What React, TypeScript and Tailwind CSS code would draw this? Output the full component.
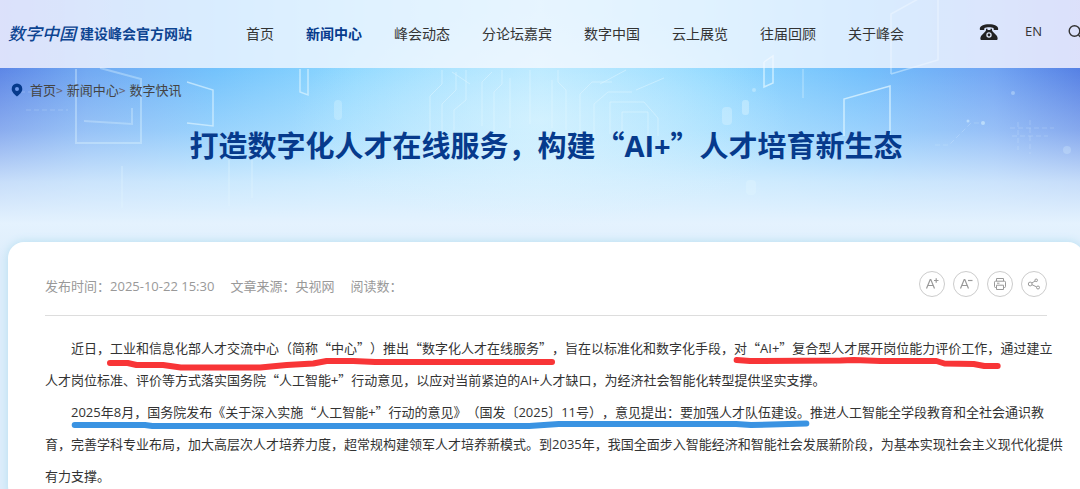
import type { ReactNode } from "react";

const navItems = ["首页", "新闻中心", "峰会动态", "分论坛嘉宾", "数字中国", "云上展览", "往届回顾", "关于峰会"];

function PhoneIcon() {
  return (
    <svg viewBox="0 0 20 18" className="h-[18px] w-5" aria-hidden="true">
      <path
        d="M.8 6.200C.6 3 4.600 1.200 10 1.200s9.400 1.800 9.200 5c0 .6-.4.900-1 .9h-2.600c-.6 0-1-.4-1-1V4.900C12.500 4 7.500 4 5.400 4.900v1.200c0 .6-.4 1-1 1H1.800c-.6 0-1-.3-1-.9z"
        fill="#222"
      />
      <path
        d="M7 5.800h1.500v1.100h3V5.800H13v1.500c.3 1 1.200 1.900 2.600 3.200 1.800 1.600 3 2.900 3 4.700v.6c0 .8-.5 1.200-1.200 1.200H2.600c-.7 0-1.200-.4-1.200-1.200v-.6c0-1.800 1.200-3.100 3-4.700C5.800 9.200 6.700 8.300 7 7.300z"
        fill="#222"
      />
      <circle cx="10" cy="12" r="2.700" fill="#e4ecfc" />
      <circle cx="10" cy="12" r="1.400" fill="#222" />
    </svg>
  );
}

function SearchIcon() {
  return (
    <svg viewBox="0 0 16 16" className="size-4" fill="none" stroke="#333" strokeWidth="1.400" aria-hidden="true">
      <circle cx="6.500" cy="7" r="5.300" />
      <path d="M10.500 11l4 4" />
    </svg>
  );
}

function PinIcon() {
  return (
    <svg viewBox="0 0 12 14" className="h-[14px] w-3" aria-hidden="true">
      <path
        fillRule="evenodd"
        d="M6 .5a5.300 5.300 0 0 0-5.300 5.400C.7 9 3.600 11.300 6 13.600 8.400 11.300 11.300 9 11.300 5.900A5.300 5.300 0 0 0 6 .5zm0 3.400a2 2 0 1 1 0 4 2 2 0 0 1 0-4z"
        fill="#063a8c"
      />
    </svg>
  );
}

function PrintIcon() {
  return (
    <svg viewBox="0 0 14 14" className="size-[14px]" fill="none" stroke="#999" strokeWidth="1" aria-hidden="true">
      <path d="M3.500 4V1.500h7V4M3.500 10.500h-1a1 1 0 0 1-1-1V5.200a1 1 0 0 1 1-1h9a1 1 0 0 1 1 1v4.300a1 1 0 0 1-1 1h-1" />
      <path d="M3.500 8.200h7v4.300h-7zM4 6.200h2.500" />
    </svg>
  );
}

function ShareIcon() {
  return (
    <svg viewBox="0 0 14 14" className="size-[14px]" fill="none" stroke="#999" strokeWidth="1" aria-hidden="true">
      <circle cx="3.200" cy="7" r="1.900" />
      <circle cx="9.200" cy="3.300" r="1.300" />
      <circle cx="11" cy="10.500" r="1.500" />
      <path d="M4.900 6L8.100 4M5 7.700l4.600 2.200" />
    </svg>
  );
}

function FontSizeIcon({ plus }: { plus: boolean }) {
  return (
    <svg viewBox="0 0 14 14" className="size-[14px]" fill="none" stroke="#999" strokeWidth="1.200" aria-hidden="true">
      <path d="M1.500 11.500L5.200 2.500h.6L9.500 11.500M2.900 8.500h5.200" />
      <path d={plus ? "M9 3.500h4.500M11.200 1.200v4.600" : "M9 3.500h4.500"} />
    </svg>
  );
}

function RoundButton({ label, children }: { label: string; children: ReactNode }) {
  return (
    <button
      type="button"
      aria-label={label}
      className="flex size-[26px] items-center justify-center rounded-full border border-[#ccc] bg-white"
    >
      {children}
    </button>
  );
}

function Latin({ children }: { children: ReactNode }) {
  return <span className="font-['Open_Sans',sans-serif]">{children}</span>;
}

function Marked({ d, color, children }: { d: string; color: string; children: ReactNode }) {
  return (
    <span className="relative">
      {children}
      <svg
        viewBox="0 0 100 16"
        preserveAspectRatio="none"
        className="pointer-events-none absolute top-[18px] left-0 h-4 w-full overflow-visible"
        fill="none"
        aria-hidden="true"
      >
        <path
          d={d}
          stroke={color}
          strokeWidth="6"
          strokeLinecap="round"
          strokeLinejoin="round"
          vectorEffect="non-scaling-stroke"
        />
      </svg>
    </span>
  );
}

function Backdrop() {
  return (
    <div className="pointer-events-none absolute inset-x-0 top-0 h-[260px] overflow-hidden" aria-hidden="true">
      <svg viewBox="0 0 1080 260" preserveAspectRatio="none" className="size-full">
        <defs>
          <linearGradient id="sky" x1="0" x2="1" y1="0" y2="0">
            <stop offset="0" stopColor="#5c86e6" />
            <stop offset="0.080" stopColor="#70a8f2" />
            <stop offset="0.200" stopColor="#72c2fc" />
            <stop offset="0.330" stopColor="#8ed8ff" />
            <stop offset="0.500" stopColor="#b0e6ff" />
            <stop offset="0.660" stopColor="#8ed8ff" />
            <stop offset="0.800" stopColor="#72bffc" />
            <stop offset="0.920" stopColor="#70a4f3" />
            <stop offset="1" stopColor="#5580e4" />
          </linearGradient>
          <linearGradient id="fade" x1="0" x2="0" y1="0" y2="1">
            <stop offset="0.260" stopColor="#e4f2fe" stopOpacity="0" />
            <stop offset="0.500" stopColor="#dcf0fe" stopOpacity="0.360" />
            <stop offset="0.700" stopColor="#dff1fe" stopOpacity="0.820" />
            <stop offset="0.860" stopColor="#e4f2fe" />
            <stop offset="1" stopColor="#deedfb" />
          </linearGradient>
          <radialGradient id="glow">
            <stop offset="0" stopColor="#e2f7ff" stopOpacity="0.550" />
            <stop offset="1" stopColor="#d8f3ff" stopOpacity="0" />
          </radialGradient>
          <linearGradient id="edge" x1="0" x2="1" y1="0" y2="0">
            <stop offset="0" stopColor="#a797ef" stopOpacity="0.450" />
            <stop offset="0.120" stopColor="#a797ef" stopOpacity="0" />
            <stop offset="0.850" stopColor="#a797ef" stopOpacity="0" />
            <stop offset="1" stopColor="#a797ef" stopOpacity="0.500" />
          </linearGradient>
        </defs>
        <rect width="1080" height="260" fill="url(#sky)" />
        <rect width="1080" height="68" fill="url(#edge)" />
        <rect width="1080" height="260" fill="url(#fade)" />
        <ellipse cx="540" cy="120" rx="250" ry="110" fill="url(#glow)" />
        <g fill="none" stroke="#e6f8ff">
          <path d="M76 69V143H141V79L100 68" strokeOpacity="0.350" strokeWidth="2" />
          <path d="M84 121L132 124V108" strokeOpacity="0.300" strokeWidth="2" />
          <path d="M187 82L213 90V126L187 123" strokeOpacity="0.600" strokeWidth="1.500" />
          <path d="M300 69V92L308 95V69" strokeOpacity="0.600" strokeWidth="1.500" />
          <path d="M764 62V87L773 83V56L764 62" strokeOpacity="0.700" strokeWidth="1.500" />
          <path d="M891 74V14L938 -12V60L891 74" strokeOpacity="0.450" strokeWidth="1.500" />
          <path d="M844 136V99L890 86V136" strokeOpacity="0.700" strokeWidth="1.500" />
          <path d="M803 69V98M122 166V208M229 160V206M252 160V198" strokeOpacity="0.350" strokeWidth="1.500" />
          <path
            d="M430 132V96l12-12V70M442 134V104l14-14V72M454 130V110l12-10V70M482 126V82l10-10M494 132V92l8-8V70M510 128V78M530 124V70M552 128V80M566 130V90l-8-8V70M580 134V94l12-12h20M594 136V104l14-12h24M610 134V102h34l14 16v18M622 134V112h26v24M470 84l-18-12M600 84l26-14M636 90l28-12"
            strokeOpacity="0.450"
          />
          <path d="M935 145h14l22-22h10M1010 128h44M1012 136h36M1018 122v28M1030 120v34M12 92h22M26 110h42" strokeOpacity="0.220" strokeDasharray="5 3" />
        </g>
        <g fill="#e2f7ff">
          <rect x="722" y="107" width="10" height="18" rx="4" opacity="0.350" />
          <rect x="742" y="100" width="7" height="15" rx="3" opacity="0.400" />
          <rect x="334" y="100" width="8" height="20" rx="4" opacity="0.300" />
          <rect x="746" y="180" width="10" height="15" rx="4" opacity="0.350" />
          <circle cx="754" cy="90" r="2" opacity="0.400" />
          <circle cx="983" cy="123" r="2" opacity="0.500" />
          <circle cx="968" cy="121" r="1.500" opacity="0.500" />
          <circle cx="1013" cy="93" r="2" opacity="0.350" />
          <circle cx="1067" cy="150" r="4" opacity="0.250" />
        </g>
      </svg>
    </div>
  );
}

export default function App() {
  return (
    <div className="relative min-h-screen overflow-hidden bg-[#deedfb] font-['Noto_Sans_CJK_SC',sans-serif] text-[#333] [text-spacing-trim:space-all]">
      <Backdrop />

      <header className="relative flex h-[68px] items-center bg-[#f6f8ff]/78 pb-[2px] pl-2">
        <a href="#" className="flex w-[238px] shrink-0 items-center gap-1 whitespace-nowrap text-[#0d4491]">
          <span className="text-[17px] leading-6 font-medium italic">数字中国</span>
          <span className="text-sm font-bold">建设峰会官方网站</span>
        </a>
        <nav className="flex gap-8 text-sm whitespace-nowrap">
          {navItems.map((item) => (
            <a
              key={item}
              href="#"
              className={item === "新闻中心" ? "font-bold text-[#063a8c]" : ""}
            >
              {item}
            </a>
          ))}
        </nav>
        <div className="-mr-1 ml-auto flex shrink-0 items-center gap-[26px] pb-[2px]">
          <a href="#" aria-label="联系电话">
            <PhoneIcon />
          </a>
          <a href="#" className="font-['Open_Sans',sans-serif] text-[13px]">
            EN
          </a>
          <button type="button" aria-label="搜索">
            <SearchIcon />
          </button>
        </div>
      </header>

      <nav className="relative flex items-center pt-3 pl-[11px] text-[13px] leading-5 text-[#444]">
        <PinIcon />
        <a href="#" className="ml-[7px]">首页</a>
        <span className="mr-1 text-xs text-[#667]">&gt;</span>
        <a href="#">新闻中心</a>
        <span className="mr-1 text-xs text-[#667]">&gt;</span>
        <a href="#">数字快讯</a>
      </nav>

      <h1 className="relative mt-[22px] pl-3 text-center text-[29px] leading-[44px] font-bold text-[#063a8c]">
        打造数字化人才在线服务，构建“<Latin>AI+</Latin>”人才培育新生态
      </h1>

      <main className="relative mt-[74px] -mr-1 ml-2 min-h-[260px] rounded-2xl bg-white pt-[29px] pl-[37px] shadow-[0_0_10px_#b5dff0]">
        <div className="mr-[37px] flex items-center justify-between border-b border-[#ddd] pb-[18px]">
          <div className="flex gap-4 pt-1 text-[13px] leading-5 text-[#999]">
            <span>
              发布时间：<Latin>2025-10-22 15:30</Latin>
            </span>
            <span>文章来源：央视网</span>
            <span>阅读数：</span>
          </div>
          <div className="flex gap-2">
            <RoundButton label="放大字体">
              <FontSizeIcon plus />
            </RoundButton>
            <RoundButton label="缩小字体">
              <FontSizeIcon plus={false} />
            </RoundButton>
            <RoundButton label="打印">
              <PrintIcon />
            </RoundButton>
            <RoundButton label="分享">
              <ShareIcon />
            </RoundButton>
          </div>
        </div>

        <article className="mr-3 pt-4 text-[13px] leading-8">
          <p className="indent-[26px]">
            近日，
            <Marked
              color="#f83537"
              d="M0 7L4 7L6 9L12 9L16 11.500L34 11.500L40 9L46 7.500L49 5L55 5L60 6L84 6L100 6"
            >
              工业和信息化部人才交流中心（简称“中心”）推出“数字化人才在线服务”
            </Marked>
            ，旨在以标准化和数字化手段，
            <Marked color="#f83537" d="M1 4L6 5L40 4.500L45 4L55 5L76 5L79 7.500L90 8L94 10L99 10">
              对“<Latin>AI+</Latin>”复合型人才展开岗位能力评价工作，
            </Marked>
            通过建立
            <br />
            人才岗位标准、评价等方式落实国务院“人工智能+”行动意见，以应对当前紧迫的<Latin>AI+</Latin>人才缺口，为经济社会智能化转型提供坚实支撑。
          </p>
          <p className="indent-[26px]">
            <Marked color="#3a93e2" d="M.5 5L10 5L11 6L62 6L66 4L76 4L90 4L92 5L99.500 3.500">
              <Latin>2025</Latin>年<Latin>8</Latin>月，国务院发布《关于深入实施“人工智能+”行动的意见》（国发〔<Latin>2025</Latin>〕<Latin>11</Latin>号），意见提出：要加强人才队伍建设。
            </Marked>
            推进人工智能全学段教育和全社会通识教
            <br />
            育，完善学科专业布局，加大高层次人才培养力度，超常规构建领军人才培养新模式。到<Latin>2035</Latin>年，我国全面步入智能经济和智能社会发展新阶段，为基本实现社会主义现代化提供
            <br />
            有力支撑。
          </p>
        </article>
      </main>
    </div>
  );
}
